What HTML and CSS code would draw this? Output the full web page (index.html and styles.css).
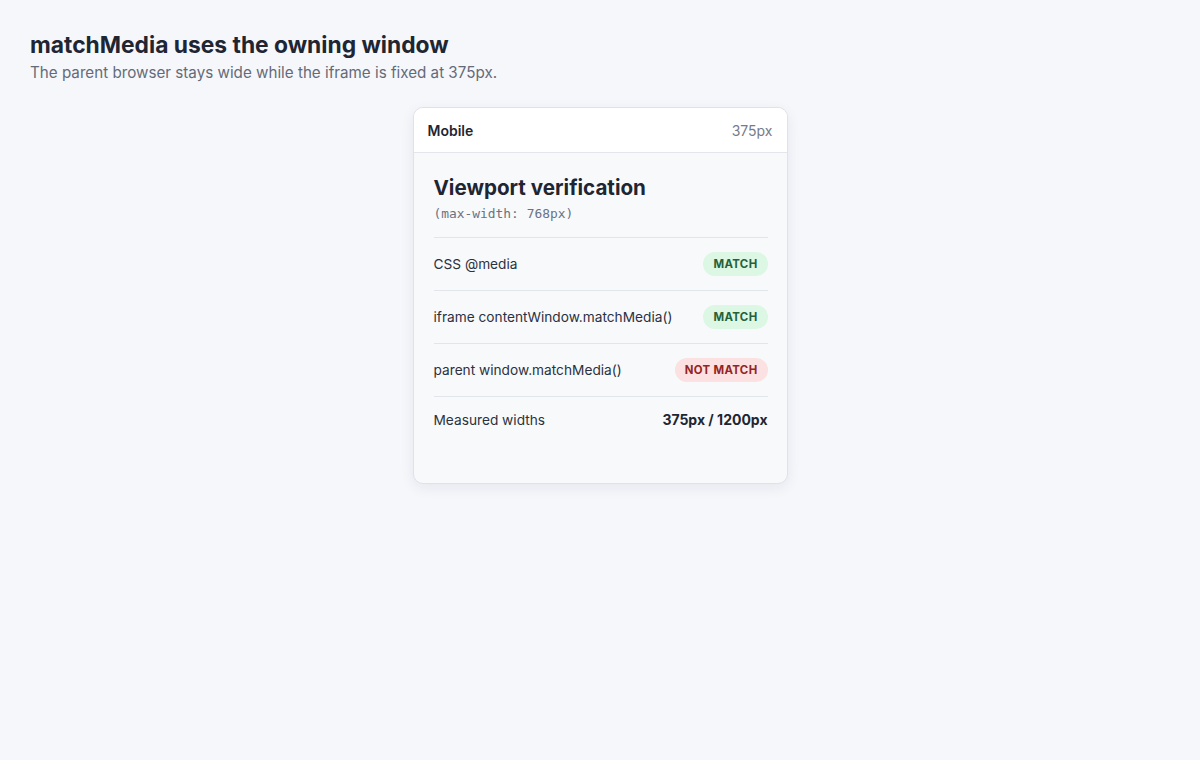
FILE: index.html
```html
<!DOCTYPE html>
<html>
<head>
	<title>matchMedia uses the owning window</title>
	<meta name="viewport" content="width=device-width, initial-scale=1.0">
	<link rel="stylesheet" href="styles.css">
</head>
<body>
	<header class="intro">
		<h1>matchMedia uses the owning window</h1>
		<p>The parent browser stays wide while the iframe is fixed at 375px.</p>
	</header>

	<div class="stage">
		<div class="device">
			<div class="device-bar">
				<span class="device-name">Mobile</span>
				<span class="device-width">375px</span>
			</div>
			<div class="frame">
				<h2>Viewport verification</h2>
				<code class="query">(max-width: 768px)</code>

				<div class="checks">
					<div class="check">
						<span>CSS @media</span>
						<span class="badge yes">MATCH</span>
					</div>
					<div class="check">
						<span>iframe contentWindow.matchMedia()</span>
						<span class="badge yes">MATCH</span>
					</div>
					<div class="check">
						<span>parent window.matchMedia()</span>
						<span class="badge no">NOT MATCH</span>
					</div>
					<div class="check widths">
						<span>Measured widths</span>
						<strong>375px / 1200px</strong>
					</div>
				</div>
			</div>
		</div>
	</div>
</body>
</html>
```

FILE: styles.css
```css
body {
	font-family: 'Inter', 'Noto Sans', sans-serif;
	background-color: #f6f7fb;
	color: #1f2937;
	margin: 0;
	padding: 31px 30px;
	box-sizing: border-box;
	min-height: 100vh;
}

.intro h1 {
	font-size: 22.8px;
	font-weight: 700;
	line-height: 28px;
	margin: 0;
	color: #1f2633;
}

.intro p {
	font-size: 15.2px;
	line-height: 22px;
	margin: 3px 0 0;
	color: #646b78;
}

.stage {
	display: flex;
	justify-content: center;
	margin-top: 23px;
}

.device {
	width: 375px;
	height: 377px;
	box-sizing: border-box;
	border: 1px solid #dfe2e8;
	border-radius: 10px;
	background-color: #f8f9fb;
	box-shadow: 0 4px 14px rgba(20, 30, 50, 0.07);
	overflow: hidden;
	display: flex;
	flex-direction: column;
}

.device-bar {
	display: flex;
	justify-content: space-between;
	align-items: center;
	height: 44px;
	padding: 0 14px;
	background-color: #ffffff;
	border-bottom: 1px solid #e3e6eb;
	font-size: 14px;
}

.device-name {
	font-weight: 600;
	color: #1f2633;
}

.device-width {
	color: #767c87;
}

.frame {
	padding: 21px 19px 0 20px;
}

.frame h2 {
	font-size: 20.6px;
	font-weight: 700;
	line-height: 28px;
	margin: 0;
	color: #1f2633;
}

.query {
	display: block;
	font-family: 'DejaVu Sans Mono', 'Liberation Mono', monospace;
	font-size: 12.9px;
	line-height: 19px;
	color: #6b7280;
	margin-top: 2px;
}

.checks {
	margin-top: 14px;
}

.check {
	display: flex;
	justify-content: space-between;
	align-items: center;
	padding: 14px 0;
	border-top: 1px solid #e2e5ea;
	font-size: 13.7px;
	line-height: 24px;
	color: #2b3140;
}

.check.widths {
	padding-top: 11px;
}

.check strong {
	font-size: 14px;
	font-weight: 700;
	color: #1f2633;
}

.badge {
	font-size: 11.4px;
	font-weight: 700;
	letter-spacing: 0.35px;
	line-height: 24px;
	padding: 0 10px;
	border-radius: 12px;
}

.badge.yes {
	background-color: #dcf7e3;
	color: #25613a;
}

.badge.no {
	background-color: #fbe1e1;
	color: #952424;
}
```
